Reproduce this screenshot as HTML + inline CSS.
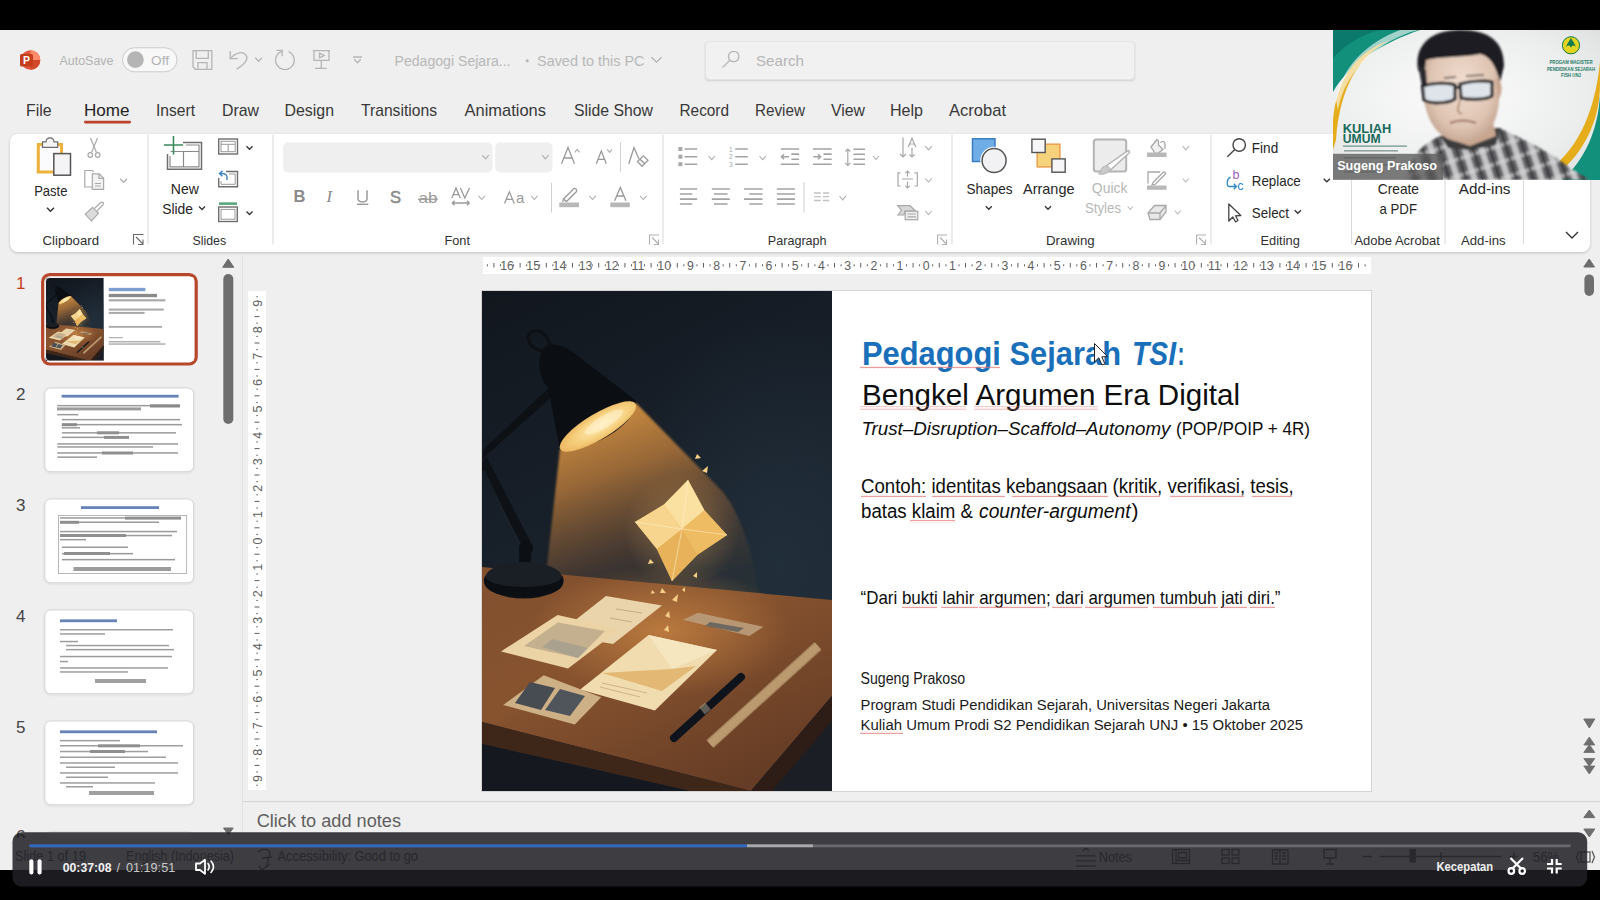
<!DOCTYPE html>
<html><head><meta charset="utf-8">
<style>
*{margin:0;padding:0;box-sizing:border-box}
html,body{width:1600px;height:900px;overflow:hidden;background:#000;font-family:"Liberation Sans",sans-serif}
.a{position:absolute}
svg{position:absolute;left:0;top:0;overflow:visible}
text{font-family:"Liberation Sans",sans-serif}
</style></head><body>
<div class="a" style="left:0;top:30px;width:1600px;height:840px;background:#efefef"></div>
<div id="ribbon" class="a" style="left:10px;top:134px;width:1580px;height:118px;background:#fff;border-radius:8px;box-shadow:0 1px 3px rgba(0,0,0,.2)"></div>
<!-- search box -->
<div class="a" style="left:705px;top:41px;width:430px;height:39px;background:#f1f1f1;border:1px solid #e3e3e3;border-radius:4px;box-shadow:0 1px 2px rgba(0,0,0,.13)"></div>

<svg id="top" width="1600" height="900" viewBox="0 0 1600 900">
  <!-- ppt icon -->
  <g>
    <circle cx="30.5" cy="60" r="9.8" fill="#e1563a"/>
    <path d="M30.5 50.2 A9.8 9.8 0 0 1 40.3 60 L30.5 60Z" fill="#ff8b6a"/>
    <path d="M30.5 60 L40.3 60 A9.8 9.8 0 0 1 30.5 69.8Z" fill="#d3492b"/>
    <rect x="20" y="54" width="13" height="12.5" rx="1.5" fill="#c43e1c"/>
    <text x="26.4" y="64.3" font-size="10.5" font-weight="bold" fill="#fff" text-anchor="middle">P</text>
  </g>
  <text x="59.5" y="64.8" font-size="13.2" fill="#b3b3b3" textLength="54" lengthAdjust="spacingAndGlyphs">AutoSave</text>
  <rect x="122.5" y="47.8" width="54.5" height="24" rx="12" fill="#f8f8f8" stroke="#cbcbcb" stroke-width="1"/>
  <circle cx="135.4" cy="59.6" r="8.4" fill="#b5b5b5"/>
  <text x="151" y="64.5" font-size="13.2" fill="#b3b3b3" textLength="18" lengthAdjust="spacingAndGlyphs">Off</text>
  <g fill="none" stroke="#b5b5b5" stroke-width="1.3">
    <!-- save -->
    <path d="M193 50.6 H211.8 V69.3 H195.5 L193 66.8Z"/>
    <path d="M196.2 50.6 V58.3 H208.3 V50.6"/>
    <path d="M198 69.3 V62.6 H207 V69.3"/>
    <!-- undo -->
    <path d="M230.2 51 V58.6 H237.8"/>
    <path d="M230.6 58.4 C236 52 244 50.5 246.6 56.5 C248 60 245 64 236.5 69.3"/>
    <path d="M255.3 57.8 L258.6 61.2 L261.9 57.8"/>
    <!-- redo -->
    <path d="M282 51.4 A9.3 9.3 0 1 0 288.6 51.7"/>
    <path d="M276.5 50.4 H282.2 V56.3"/>
    <!-- present -->
    <path d="M312.8 50.6 H330 M314 50.6 V60.3 H329 V50.6 M321.3 60.3 V68.2 M315 68.4 H326.8"/>
    <path d="M319.5 53.2 L324.2 55.5 L319.5 57.8Z"/>
    <!-- customize -->
    <path d="M353 57 H362 M354.2 59.3 L357.5 62.8 L360.8 59.3"/>
    <!-- saved chevron -->
    <path d="M651.5 57.2 L656.5 62.2 L661.5 57.2"/>
    <!-- search icon -->
    <circle cx="733.7" cy="56.5" r="5.2"/>
    <path d="M729.9 60.3 L722.4 67.6"/>
  </g>
  <text x="394.5" y="65.5" font-size="14" fill="#b8b8b8" textLength="116" lengthAdjust="spacingAndGlyphs">Pedagogi Sejara...</text>
  <circle cx="527.2" cy="60.8" r="1.6" fill="#b8b8b8"/>
  <text x="537" y="65.5" font-size="14" fill="#b8b8b8" textLength="107.5" lengthAdjust="spacingAndGlyphs">Saved to this PC</text>
  <text x="756" y="66" font-size="14.5" fill="#b5b5b5" textLength="48" lengthAdjust="spacingAndGlyphs">Search</text>

  <!-- tabs -->
  <g font-size="17" fill="#383838">
    <text x="26" y="116.3" textLength="25.5" lengthAdjust="spacingAndGlyphs">File</text>
    <text x="84" y="116.3" fill="#222" textLength="45.5" lengthAdjust="spacingAndGlyphs">Home</text>
    <text x="156" y="116.3" textLength="39" lengthAdjust="spacingAndGlyphs">Insert</text>
    <text x="222" y="116.3" textLength="37" lengthAdjust="spacingAndGlyphs">Draw</text>
    <text x="284.5" y="116.3" textLength="49.5" lengthAdjust="spacingAndGlyphs">Design</text>
    <text x="361" y="116.3" textLength="76" lengthAdjust="spacingAndGlyphs">Transitions</text>
    <text x="464.5" y="116.3" textLength="81.5" lengthAdjust="spacingAndGlyphs">Animations</text>
    <text x="574" y="116.3" textLength="79" lengthAdjust="spacingAndGlyphs">Slide Show</text>
    <text x="679.5" y="116.3" textLength="49.5" lengthAdjust="spacingAndGlyphs">Record</text>
    <text x="755" y="116.3" textLength="50" lengthAdjust="spacingAndGlyphs">Review</text>
    <text x="831" y="116.3" textLength="34" lengthAdjust="spacingAndGlyphs">View</text>
    <text x="890" y="116.3" textLength="33" lengthAdjust="spacingAndGlyphs">Help</text>
    <text x="949" y="116.3" textLength="57" lengthAdjust="spacingAndGlyphs">Acrobat</text>
  </g>
  <rect x="84" y="120.8" width="47" height="2.6" rx="1.3" fill="#b8432a"/>
</svg>

<svg id="rib" width="1600" height="900" viewBox="0 0 1600 900">
  <!-- separators -->
  <g fill="#dadada">
    <rect x="147.5" y="134.5" width="1" height="110"/>
    <rect x="272.5" y="134.5" width="1" height="110"/>
    <rect x="662.5" y="134.5" width="1" height="110"/>
    <rect x="951.5" y="134.5" width="1" height="110"/>
    <rect x="1210.5" y="134.5" width="1" height="110"/>
    <rect x="1351" y="180" width="1" height="64"/>
    <rect x="1444.5" y="180" width="1" height="64"/>
    <rect x="1523" y="180" width="1" height="64"/>
  </g>
  <g font-size="13.5" fill="#303030">
    <text x="42.5" y="244.6" textLength="56.5" lengthAdjust="spacingAndGlyphs">Clipboard</text>
    <text x="192.6" y="244.6" textLength="33.5" lengthAdjust="spacingAndGlyphs">Slides</text>
    <text x="444.5" y="244.6" textLength="25.5" lengthAdjust="spacingAndGlyphs">Font</text>
    <text x="767.8" y="244.6" textLength="58.8" lengthAdjust="spacingAndGlyphs">Paragraph</text>
    <text x="1046" y="244.6" textLength="48.7" lengthAdjust="spacingAndGlyphs">Drawing</text>
    <text x="1260.5" y="244.6" textLength="39.3" lengthAdjust="spacingAndGlyphs">Editing</text>
    <text x="1354.4" y="244.6" textLength="85.4" lengthAdjust="spacingAndGlyphs">Adobe Acrobat</text>
    <text x="1461" y="244.6" textLength="44.6" lengthAdjust="spacingAndGlyphs">Add-ins</text>
  </g>
  <!-- launchers -->
  <g fill="none" stroke="#6a6a6a" stroke-width="1.1">
    <path d="M133.5 244.5 V234.5 H143.5 M136 237 L143 244 M143 239.5 V244.5 H138"/>
  </g>
  <g fill="none" stroke="#b0b0b0" stroke-width="1.1">
    <path d="M649.5 244.5 V235 H659 M652 237.5 L658.5 244 M658.5 239.5 V244.5 H654"/>
    <path d="M937.6 244.5 V235 H947 M940 237.5 L946.5 244 M946.5 239.5 V244.5 H942"/>
    <path d="M1196.6 244.5 V235 H1206 M1199 237.5 L1205.5 244 M1205.5 239.5 V244.5 H1201"/>
  </g>

  <!-- ===== Clipboard ===== -->
  <rect x="38.3" y="144.5" width="23.2" height="27.5" fill="#fbfbfd" stroke="#ecb23c" stroke-width="3"/>
  <path d="M42.5 147.3 V141.8 H46 C46.5 136.5 53.5 136.5 54 141.8 H57.7 V147.3Z" fill="#f4f4f4" stroke="#6b6b6b" stroke-width="1.2"/>
  <rect x="53.8" y="153.6" width="16.7" height="21.6" fill="#f4f4f6" stroke="#555" stroke-width="1.5"/>
  <text x="34.2" y="195.5" font-size="14.5" fill="#262626" textLength="33.3" lengthAdjust="spacingAndGlyphs">Paste</text>
  <path d="M47 207.8 L50.5 211.3 L54 207.8" fill="none" stroke="#333" stroke-width="1.4"/>
  <g fill="none" stroke="#a9a9a9" stroke-width="1.2">
    <!-- scissors -->
    <path d="M90.5 138 L96.5 152.5 M97.5 138 L91.5 152.5"/>
    <circle cx="90.3" cy="155" r="2.3"/><circle cx="97.7" cy="155" r="2.3"/>
    <!-- copy -->
    <path d="M92 187 H84.8 V170.5 H92.5 L93.5 172"/>
    <path d="M92.3 189.3 V173.8 H99.3 L103.6 178.2 V189.3Z" fill="#f2f2f2"/>
    <path d="M99 174 V178.4 H103.5 M95 183.5 H101 M95 186 H101"/>
    <path d="M120.3 179 L123.6 182.3 L126.9 179"/>
    <!-- painter -->
    <path d="M94.5 208.5 L101 202.3 C102.5 201.5 104 203 103.2 204.5 L97 211"/>
    <path d="M92.5 207.3 L98.5 213.3 L91.5 220.8 L85.3 214.3 Z" fill="#dcdcdc"/>
  </g>

  <!-- ===== Slides ===== -->
  <g fill="none" stroke-width="1.5">
    <path d="M167.5 154 V169.3 H201.5 V142.5 H183" stroke="#6d6d6d"/>
    <path d="M170 156 V166.8 H199 V145 H186 M170.5 151.5 H198.5 M183.5 151.8 V166.5" stroke="#8a8a8a" stroke-width="1.2"/>
    <path d="M173.5 136 V154.5 M164 145 H183" stroke="#3a8a5c" stroke-width="1.6"/>
  </g>
  <text x="170.8" y="193.5" font-size="14.5" fill="#262626" textLength="28" lengthAdjust="spacingAndGlyphs">New</text>
  <text x="162.2" y="213.5" font-size="14.5" fill="#262626" textLength="30.8" lengthAdjust="spacingAndGlyphs">Slide</text>
  <g fill="none" stroke="#333" stroke-width="1.3">
    <path d="M199 206.5 L202 209.5 L205 206.5"/>
    <path d="M246.5 146.3 L249.5 149.3 L252.5 146.3"/>
    <path d="M246.5 211.5 L249.5 214.5 L252.5 211.5"/>
  </g>
  <g fill="none" stroke="#6d6d6d" stroke-width="1.4">
    <rect x="218.7" y="139" width="18.8" height="15"/>
    <rect x="221" y="141.3" width="14.2" height="10.4" stroke="#999" stroke-width="1"/>
    <path d="M221 144.3 H235 M228.2 144.3 V151.5" stroke="#999" stroke-width="1"/>
    <path d="M226 171.5 H237.5 V186.7 H218.7 V178" />
    <path d="M221 181 V184.3 H235.2 V174 H229" stroke="#999" stroke-width="1"/>
    <rect x="218.7" y="207" width="18.6" height="14.5"/>
    <rect x="221" y="209.4" width="14" height="9.8" stroke="#999" stroke-width="1"/>
  </g>
  <path d="M219 203.6 H237" stroke="#58a87a" stroke-width="2.6"/>
  <path d="M227 180 V177.5 C227 174.5 225 173.5 222 173.5 H219.5 M222.5 170.8 L219.5 173.5 L222.5 176.3" fill="none" stroke="#3d82c4" stroke-width="1.4"/>

  <!-- ===== Font ===== -->
  <rect x="283" y="142.5" width="209.5" height="30" rx="5" fill="#efefef"/>
  <rect x="495.2" y="142.5" width="57.3" height="30" rx="5" fill="#efefef"/>
  <g fill="none" stroke="#adadad" stroke-width="1.1">
    <path d="M482.3 155.2 L485.5 158.8 L488.7 155.2"/>
    <path d="M542.2 155.2 L545.4 158.8 L548.6 155.2"/>
    <path d="M574.8 152.3 L577.2 149.3 L579.6 152.3"/>
    <path d="M607.2 149.3 L609.6 152.3 L612 149.3"/>
    <path d="M478.5 195.8 L481.7 199.5 L485 195.8"/>
    <path d="M531.3 195.8 L534.4 199.5 L537.5 195.8"/>
    <path d="M589.3 195.8 L592.6 199.5 L595.8 195.8"/>
    <path d="M640 195.8 L643.3 199.5 L646.6 195.8"/>
  </g>
  <rect x="620" y="142.3" width="1" height="29.7" fill="#d0d0d0"/>
  <rect x="551" y="182.8" width="1" height="29.8" fill="#d0d0d0"/>
  <g fill="none" stroke="#9a9a9a" stroke-width="1.3">
    <path d="M561.5 163.7 L568 147.5 L574.5 163.7 M563.8 158 H572.2"/>
    <path d="M596.3 163.7 L601.3 151 L606.3 163.7 M598 159.3 H604.6"/>
    <path d="M628.8 163.7 L634 147.5 L639 159"/>
    <path d="M637.5 161.5 L643.5 155.8 L648 160.3 L642 166.2Z M640 159.3 L644.5 163.5"/>
    <path d="M451.8 198 L456 188 L460.2 198 M453.3 194.6 H458.7 M460.4 188 L464.8 198 L469.5 188"/>
    <path d="M452 203 H469.5 M452 203 L454.5 200.8 M452 203 L454.5 205.3 M469.5 203 L467 200.8 M469.5 203 L467 205.3"/>
    <path d="M504.5 203.4 L509.4 191.8 L514.3 203.4 M506 199.3 H513"/>
    <path d="M362 191 V202.5" stroke="none"/>
    <path d="M358 190.2 V198.5 C358 203 367 203 367 198.5 V190.2" stroke-width="1.5"/>
    <path d="M357 204.3 H368.3" stroke-width="1.4"/>
    <path d="M418 199.2 H437.7" stroke-width="1.3"/>
    <path d="M614.6 200.8 L620.3 187.4 L626 200.8 M616.6 196 H624"/>
    <path d="M563.5 199 L573.5 189 C575 187.5 577.5 189.5 576.5 191.5 L566.5 201.5 Z M562.8 202 L563.5 199"/>
  </g>
  <rect x="559.3" y="202.5" width="19.7" height="4.7" fill="#b8b8b8"/>
  <rect x="610.3" y="202.5" width="19.5" height="4.7" fill="#b8b8b8"/>
  <text x="293.5" y="202.3" font-size="16.5" font-weight="bold" fill="#8a8a8a">B</text>
  <text x="326.5" y="202.3" font-size="16.5" font-style="italic" fill="#8a8a8a" font-family="Liberation Serif" style="font-family:'Liberation Serif'">I</text>
  <text x="390" y="202.8" font-size="16.5" fill="#8a8a8a" stroke="#8a8a8a" stroke-width="0.5">S</text>
  <text x="418.5" y="203" font-size="15" fill="#9a9a9a" textLength="19" lengthAdjust="spacingAndGlyphs">ab</text>
  <text x="516" y="203.4" font-size="15" fill="#9a9a9a">a</text>
</svg>

<svg id="rib2" width="1600" height="900" viewBox="0 0 1600 900">
  <!-- ===== Paragraph ===== -->
  <g fill="none" stroke="#a3a3a3" stroke-width="1.6">
    <path d="M684.6 149 H697.2 M684.6 156.7 H697.2 M684.6 164.2 H697.2"/>
    <path d="M735.2 149 H747.8 M735.2 156.7 H747.8 M735.2 164.2 H747.8"/>
    <path d="M780.8 149 H799.1 M791.3 154.1 H799.1 M791.3 159.2 H799.1 M780.8 164.2 H799.1 M781.5 156.7 H789 M784 154.2 L781.5 156.7 L784 159.2"/>
    <path d="M813 149 H831.7 M823.5 154.1 H831.7 M823.5 159.2 H831.7 M813 164.2 H831.7 M813.3 156.7 H820.5 M818 154.2 L820.5 156.7 L818 159.2"/>
    <path d="M853.5 149.2 H865 M853.5 154.2 H865 M853.5 159.2 H865 M853.5 164.2 H865"/>
    <path d="M679.9 189 H697.2 M679.9 194 H692.3 M679.9 199.1 H697.2 M679.9 204 H692.3"/>
    <path d="M711.8 189 H729.8 M714 194 H727.6 M711.8 199.1 H729.8 M714 204 H727.6"/>
    <path d="M744 189 H762.5 M749.3 194 H762.5 M744 199.1 H762.5 M749.3 204 H762.5"/>
    <path d="M776.9 189 H794.9 M776.9 194 H794.9 M776.9 199.1 H794.9 M776.9 204 H794.9"/>
  </g>
  <g fill="#a8a8a8">
    <rect x="678.4" y="147" width="4" height="4"/><rect x="678.4" y="154.7" width="4" height="4"/><rect x="678.4" y="162.2" width="4" height="4"/>
  </g>
  <g font-size="6.5" fill="#a8a8a8"><text x="729" y="151.5">1</text><text x="729" y="159.2">2</text><text x="729" y="166.8">3</text></g>
  <g fill="none" stroke="#c4c4c4" stroke-width="1.3">
    <path d="M814 193 H820.7 M823 193 H829.2 M814 196.7 H820.7 M823 196.7 H829.2 M814 200.5 H820.7 M823 200.5 H829.2"/>
  </g>
  <g fill="none" stroke="#a8a8a8" stroke-width="1.2">
    <path d="M847.8 149 V165.5 M845.3 151.5 L847.8 149 L850.3 151.5 M845.3 163 L847.8 165.5 L850.3 163"/>
    <path d="M903 137.5 V157 M900 154 L903 157 L906 154 M912 148 V157 M909.5 154.5 L912 157 L914.5 154.5"/>
    <path d="M908.2 147 L912 138.3 L915.8 147 M909.5 144 H914.5"/>
    <path d="M900.5 172.8 H898 V186 H900.5 M914.5 172.8 H917.3 V186 H914.5 M902 179 H913 M907.5 171 V176.5 M905.3 173.2 L907.5 171 L909.7 173.2 M907.5 181.5 V188 M905.3 185.8 L907.5 188 L909.7 185.8"/>
    <path d="M897.8 205.7 H910 L915.5 211 H905 L904 215 H898 L901.5 210.5Z" fill="#d8d8d8"/>
    <rect x="905.2" y="211.2" width="12.6" height="8.5" fill="#eee"/>
    <path d="M907.5 214 H916 M907.5 216.8 H916"/>
  </g>
  <rect x="803.5" y="182" width="1" height="30.6" fill="#d0d0d0"/>
  <g fill="none" stroke="#adadad" stroke-width="1.1">
    <path d="M708.5 156 L711.7 159.6 L714.9 156"/>
    <path d="M759.5 156 L762.7 159.6 L765.9 156"/>
    <path d="M873 156 L876 159.5 L879 156"/>
    <path d="M925.3 146.2 L928.5 149.8 L931.7 146.2"/>
    <path d="M925.3 178.5 L928.5 182 L931.7 178.5"/>
    <path d="M925.3 211 L928.5 214.5 L931.7 211"/>
    <path d="M839.5 196 L842.7 199.8 L845.9 196"/>
  </g>

  <!-- ===== Drawing ===== -->
  <rect x="972.5" y="138.8" width="22.5" height="22.7" fill="#6fade6" stroke="#3a7ec2" stroke-width="1.5"/>
  <circle cx="994.1" cy="160.5" r="13.8" fill="#fff"/>
  <circle cx="994.1" cy="160.5" r="12" fill="#f2f2f4" stroke="#555" stroke-width="1.5"/>
  <text x="966.5" y="193.5" font-size="14.5" fill="#262626" textLength="46" lengthAdjust="spacingAndGlyphs">Shapes</text>
  <rect x="1037.2" y="144.2" width="22.7" height="22.7" fill="#f7d27c" stroke="#eaa04e" stroke-width="1.5"/>
  <rect x="1031.9" y="139.2" width="13.3" height="13.3" fill="#f6f6f8" stroke="#555" stroke-width="1.4"/>
  <rect x="1051.9" y="158.9" width="13.3" height="13.3" fill="#f6f6f8" stroke="#555" stroke-width="1.4"/>
  <text x="1023" y="193.5" font-size="14.5" fill="#262626" textLength="51.5" lengthAdjust="spacingAndGlyphs">Arrange</text>
  <g fill="none" stroke="#333" stroke-width="1.3">
    <path d="M985.8 206.2 L988.8 209.3 L991.8 206.2"/>
    <path d="M1045 206.2 L1048 209.3 L1051 206.2"/>
    <path d="M1323.7 178.7 L1326.8 181.8 L1329.9 178.7"/>
    <path d="M1294.7 210.2 L1297.8 213.3 L1300.9 210.2"/>
    <path d="M1566 232 L1572 238 L1578 232" stroke-width="1.4"/>
  </g>
  <rect x="1093.8" y="139.5" width="32.4" height="32" rx="2.5" fill="#ececec" stroke="#b3b3b3" stroke-width="2"/>
  <path d="M1106 166 L1127.5 151 C1129.5 150 1130 152 1129 153 L1110 170.5" fill="#fff" stroke="#b3b3b3" stroke-width="1.5"/>
  <path d="M1103 167 C1108 164.5 1111 168 1109.5 170.5 C1107 174 1102 175 1098.5 173.8 C1101 172 1100.5 168.5 1103 167Z" fill="#c9c9c9" stroke="#b0b0b0" stroke-width="1"/>
  <text x="1091.8" y="193.2" font-size="14.5" fill="#b8b8b8" textLength="35.7" lengthAdjust="spacingAndGlyphs">Quick</text>
  <text x="1085" y="212.5" font-size="14.5" fill="#b8b8b8" textLength="36" lengthAdjust="spacingAndGlyphs">Styles</text>
  <g fill="none" stroke="#b8b8b8" stroke-width="1.1">
    <path d="M1127.7 206.5 L1130.3 209.5 L1132.9 206.5"/>
    <path d="M1182.7 146.2 L1185.8 149.8 L1188.9 146.2"/>
    <path d="M1182.7 178.5 L1185.8 182 L1188.9 178.5"/>
    <path d="M1174.7 210.5 L1177.8 214 L1180.9 210.5"/>
  </g>
  <g fill="none" stroke="#a8a8a8" stroke-width="1.3">
    <path d="M1151 147 L1157 139.5 L1158.5 141 L1158.5 145 L1163 149.5 L1156 154.5Z" fill="#f0f0f0"/>
    <path d="M1160.5 143 C1162 140.5 1164.5 141 1165 144 V149"/>
    <path d="M1148 183.5 V172 H1160"/>
    <path d="M1153 182.5 L1163 172.5 C1164.5 171 1166.5 173 1165 174.5 L1155 184.5 L1152 185Z"/>
    <path d="M1148 213 L1154.5 205.5 H1166 L1166 212 L1160 219.5 H1150 Z" fill="#e8e8e8"/>
    <path d="M1148 213 H1160 L1166 205.7 M1160 213 V219.5"/>
  </g>
  <rect x="1147" y="152.5" width="19.5" height="4.5" fill="#b8b8b8"/>
  <rect x="1147" y="185.5" width="19.5" height="4.3" fill="#b8b8b8"/>

  <!-- ===== Editing ===== -->
  <g fill="none" stroke="#444" stroke-width="1.4">
    <circle cx="1239.2" cy="145" r="6.2"/>
    <path d="M1234.8 149.5 L1227.3 156.8"/>
    <path d="M1228.8 204 V221 L1232.8 217 L1235.5 221.8 L1238 220.5 L1235.5 215.8 L1240.8 215.5 Z" stroke-width="1.3" stroke-linejoin="round"/>
  </g>
  <text x="1232.5" y="179.3" font-size="12.5" fill="#9a5fb5">b</text>
  <text x="1237.3" y="190" font-size="12.5" fill="#2f86c8">c</text>
  <path d="M1230.5 177.2 C1226.5 179 1226 186 1229.5 186.5 H1236.3 M1233.8 183.8 L1236.5 186.5 L1233.8 189.2" fill="none" stroke="#2f86c8" stroke-width="1.3"/>
  <g font-size="14.5" fill="#262626">
    <text x="1251.8" y="153" textLength="26.4" lengthAdjust="spacingAndGlyphs">Find</text>
    <text x="1251.8" y="186" textLength="49" lengthAdjust="spacingAndGlyphs">Replace</text>
    <text x="1251.8" y="218" textLength="37.2" lengthAdjust="spacingAndGlyphs">Select</text>
    <text x="1377.8" y="194" textLength="41.2" lengthAdjust="spacingAndGlyphs">Create</text>
    <text x="1379.5" y="214" textLength="37.5" lengthAdjust="spacingAndGlyphs">a PDF</text>
    <text x="1458.8" y="194" textLength="51.7" lengthAdjust="spacingAndGlyphs">Add-ins</text>
  </g>
</svg>

<svg id="main" width="1600" height="900" viewBox="0 0 1600 900">
  <!-- left panel scrollbar -->
  <rect x="242" y="253" width="1" height="617" fill="#e2e2e2"/>
  <path d="M222.7 267.3 L228.2 259 L233.8 267.3Z" fill="#6e6e6e" stroke="#6e6e6e" stroke-width="1" stroke-linejoin="round"/>
  <rect x="223.3" y="274" width="10" height="150" rx="5" fill="#6e6e6e"/>
  <path d="M223.5 828 L228.3 834.8 L233.2 828Z" fill="#6e6e6e" stroke="#6e6e6e" stroke-width="1" stroke-linejoin="round"/>
  <!-- right scrollbar -->
  <path d="M1583.8 267 L1589.2 259 L1594.6 267Z" fill="#6e6e6e" stroke="#6e6e6e" stroke-width="1" stroke-linejoin="round"/>
  <rect x="1584.4" y="274.4" width="9.6" height="21.5" rx="4.8" fill="#6e6e6e"/>
  <path d="M1583.8 719 L1589.3 728 L1594.8 719Z" fill="#6e6e6e" stroke="#6e6e6e" stroke-width="1" stroke-linejoin="round"/>
  <path d="M1583.8 745 L1589.3 737 L1594.8 745Z M1583.8 752.5 L1589.3 744.5 L1594.8 752.5Z" fill="#6e6e6e" stroke="#6e6e6e" stroke-width="0.8" stroke-linejoin="round"/>
  <path d="M1583.8 758.5 L1589.3 766.5 L1594.8 758.5Z M1583.8 766 L1589.3 774 L1594.8 766Z" fill="#6e6e6e" stroke="#6e6e6e" stroke-width="0.8" stroke-linejoin="round"/>
  <path d="M1583.8 817.6 L1589.3 810 L1594.8 817.6Z" fill="#6e6e6e" stroke="#6e6e6e" stroke-width="1" stroke-linejoin="round"/>
  <path d="M1583.8 829 L1589.3 837 L1594.8 829Z" fill="#6e6e6e" stroke="#6e6e6e" stroke-width="1" stroke-linejoin="round"/>
  <!-- rulers -->
  <rect x="483" y="257" width="888" height="17" fill="#fff"/>
  <rect x="248" y="291" width="18" height="499" fill="#fff"/>
  <g font-size="12.3" fill="#606060">
<text x="507.0" y="270" text-anchor="middle">16</text>
<text x="533.2" y="270" text-anchor="middle">15</text>
<text x="559.4" y="270" text-anchor="middle">14</text>
<text x="585.6" y="270" text-anchor="middle">13</text>
<text x="611.8" y="270" text-anchor="middle">12</text>
<text x="638.0" y="270" text-anchor="middle">11</text>
<text x="664.2" y="270" text-anchor="middle">10</text>
<text x="690.4" y="270" text-anchor="middle">9</text>
<text x="716.6" y="270" text-anchor="middle">8</text>
<text x="742.8" y="270" text-anchor="middle">7</text>
<text x="769.0" y="270" text-anchor="middle">6</text>
<text x="795.2" y="270" text-anchor="middle">5</text>
<text x="821.4" y="270" text-anchor="middle">4</text>
<text x="847.6" y="270" text-anchor="middle">3</text>
<text x="873.8" y="270" text-anchor="middle">2</text>
<text x="900.0" y="270" text-anchor="middle">1</text>
<text x="926.2" y="270" text-anchor="middle">0</text>
<text x="952.4" y="270" text-anchor="middle">1</text>
<text x="978.6" y="270" text-anchor="middle">2</text>
<text x="1004.8" y="270" text-anchor="middle">3</text>
<text x="1031.0" y="270" text-anchor="middle">4</text>
<text x="1057.2" y="270" text-anchor="middle">5</text>
<text x="1083.4" y="270" text-anchor="middle">6</text>
<text x="1109.6" y="270" text-anchor="middle">7</text>
<text x="1135.8" y="270" text-anchor="middle">8</text>
<text x="1162.0" y="270" text-anchor="middle">9</text>
<text x="1188.2" y="270" text-anchor="middle">10</text>
<text x="1214.4" y="270" text-anchor="middle">11</text>
<text x="1240.6" y="270" text-anchor="middle">12</text>
<text x="1266.8" y="270" text-anchor="middle">13</text>
<text x="1293.0" y="270" text-anchor="middle">14</text>
<text x="1319.2" y="270" text-anchor="middle">15</text>
<text x="1345.4" y="270" text-anchor="middle">16</text>
<rect x="486.9" y="264.3" width="1" height="2"/>
<rect x="493.4" y="263" width="1" height="4.5"/>
<rect x="500.0" y="264.3" width="1" height="2"/>
<rect x="513.1" y="264.3" width="1" height="2"/>
<rect x="519.6" y="263" width="1" height="4.5"/>
<rect x="526.2" y="264.3" width="1" height="2"/>
<rect x="539.2" y="264.3" width="1" height="2"/>
<rect x="545.8" y="263" width="1" height="4.5"/>
<rect x="552.4" y="264.3" width="1" height="2"/>
<rect x="565.5" y="264.3" width="1" height="2"/>
<rect x="572.0" y="263" width="1" height="4.5"/>
<rect x="578.6" y="264.3" width="1" height="2"/>
<rect x="591.7" y="264.3" width="1" height="2"/>
<rect x="598.2" y="263" width="1" height="4.5"/>
<rect x="604.8" y="264.3" width="1" height="2"/>
<rect x="617.9" y="264.3" width="1" height="2"/>
<rect x="624.4" y="263" width="1" height="4.5"/>
<rect x="631.0" y="264.3" width="1" height="2"/>
<rect x="644.0" y="264.3" width="1" height="2"/>
<rect x="650.6" y="263" width="1" height="4.5"/>
<rect x="657.1" y="264.3" width="1" height="2"/>
<rect x="670.2" y="264.3" width="1" height="2"/>
<rect x="676.8" y="263" width="1" height="4.5"/>
<rect x="683.4" y="264.3" width="1" height="2"/>
<rect x="696.5" y="264.3" width="1" height="2"/>
<rect x="703.0" y="263" width="1" height="4.5"/>
<rect x="709.6" y="264.3" width="1" height="2"/>
<rect x="722.6" y="264.3" width="1" height="2"/>
<rect x="729.2" y="263" width="1" height="4.5"/>
<rect x="735.8" y="264.3" width="1" height="2"/>
<rect x="748.9" y="264.3" width="1" height="2"/>
<rect x="755.4" y="263" width="1" height="4.5"/>
<rect x="762.0" y="264.3" width="1" height="2"/>
<rect x="775.0" y="264.3" width="1" height="2"/>
<rect x="781.6" y="263" width="1" height="4.5"/>
<rect x="788.1" y="264.3" width="1" height="2"/>
<rect x="801.2" y="264.3" width="1" height="2"/>
<rect x="807.8" y="263" width="1" height="4.5"/>
<rect x="814.4" y="264.3" width="1" height="2"/>
<rect x="827.5" y="264.3" width="1" height="2"/>
<rect x="834.0" y="263" width="1" height="4.5"/>
<rect x="840.6" y="264.3" width="1" height="2"/>
<rect x="853.6" y="264.3" width="1" height="2"/>
<rect x="860.2" y="263" width="1" height="4.5"/>
<rect x="866.8" y="264.3" width="1" height="2"/>
<rect x="879.9" y="264.3" width="1" height="2"/>
<rect x="886.4" y="263" width="1" height="4.5"/>
<rect x="893.0" y="264.3" width="1" height="2"/>
<rect x="906.0" y="264.3" width="1" height="2"/>
<rect x="912.6" y="263" width="1" height="4.5"/>
<rect x="919.1" y="264.3" width="1" height="2"/>
<rect x="932.2" y="264.3" width="1" height="2"/>
<rect x="938.8" y="263" width="1" height="4.5"/>
<rect x="945.4" y="264.3" width="1" height="2"/>
<rect x="958.5" y="264.3" width="1" height="2"/>
<rect x="965.0" y="263" width="1" height="4.5"/>
<rect x="971.6" y="264.3" width="1" height="2"/>
<rect x="984.6" y="264.3" width="1" height="2"/>
<rect x="991.2" y="263" width="1" height="4.5"/>
<rect x="997.8" y="264.3" width="1" height="2"/>
<rect x="1010.9" y="264.3" width="1" height="2"/>
<rect x="1017.4" y="263" width="1" height="4.5"/>
<rect x="1024.0" y="264.3" width="1" height="2"/>
<rect x="1037.0" y="264.3" width="1" height="2"/>
<rect x="1043.6" y="263" width="1" height="4.5"/>
<rect x="1050.2" y="264.3" width="1" height="2"/>
<rect x="1063.2" y="264.3" width="1" height="2"/>
<rect x="1069.8" y="263" width="1" height="4.5"/>
<rect x="1076.4" y="264.3" width="1" height="2"/>
<rect x="1089.5" y="264.3" width="1" height="2"/>
<rect x="1096.0" y="263" width="1" height="4.5"/>
<rect x="1102.6" y="264.3" width="1" height="2"/>
<rect x="1115.7" y="264.3" width="1" height="2"/>
<rect x="1122.2" y="263" width="1" height="4.5"/>
<rect x="1128.8" y="264.3" width="1" height="2"/>
<rect x="1141.8" y="264.3" width="1" height="2"/>
<rect x="1148.4" y="263" width="1" height="4.5"/>
<rect x="1155.0" y="264.3" width="1" height="2"/>
<rect x="1168.0" y="264.3" width="1" height="2"/>
<rect x="1174.6" y="263" width="1" height="4.5"/>
<rect x="1181.2" y="264.3" width="1" height="2"/>
<rect x="1194.2" y="264.3" width="1" height="2"/>
<rect x="1200.8" y="263" width="1" height="4.5"/>
<rect x="1207.4" y="264.3" width="1" height="2"/>
<rect x="1220.5" y="264.3" width="1" height="2"/>
<rect x="1227.0" y="263" width="1" height="4.5"/>
<rect x="1233.6" y="264.3" width="1" height="2"/>
<rect x="1246.6" y="264.3" width="1" height="2"/>
<rect x="1253.2" y="263" width="1" height="4.5"/>
<rect x="1259.8" y="264.3" width="1" height="2"/>
<rect x="1272.8" y="264.3" width="1" height="2"/>
<rect x="1279.4" y="263" width="1" height="4.5"/>
<rect x="1286.0" y="264.3" width="1" height="2"/>
<rect x="1299.0" y="264.3" width="1" height="2"/>
<rect x="1305.6" y="263" width="1" height="4.5"/>
<rect x="1312.2" y="264.3" width="1" height="2"/>
<rect x="1325.2" y="264.3" width="1" height="2"/>
<rect x="1331.8" y="263" width="1" height="4.5"/>
<rect x="1338.4" y="264.3" width="1" height="2"/>
<rect x="1351.5" y="264.3" width="1" height="2"/>
<rect x="1358.0" y="263" width="1" height="4.5"/>
<rect x="1364.6" y="264.3" width="1" height="2"/>

  </g>
  <g font-size="12.5" fill="#606060">
<text transform="translate(261.9 303.4) rotate(-90)" text-anchor="middle" x="0" y="0">9</text>
<text transform="translate(261.9 329.8) rotate(-90)" text-anchor="middle" x="0" y="0">8</text>
<text transform="translate(261.9 356.2) rotate(-90)" text-anchor="middle" x="0" y="0">7</text>
<text transform="translate(261.9 382.6) rotate(-90)" text-anchor="middle" x="0" y="0">6</text>
<text transform="translate(261.9 409.0) rotate(-90)" text-anchor="middle" x="0" y="0">5</text>
<text transform="translate(261.9 435.4) rotate(-90)" text-anchor="middle" x="0" y="0">4</text>
<text transform="translate(261.9 461.8) rotate(-90)" text-anchor="middle" x="0" y="0">3</text>
<text transform="translate(261.9 488.2) rotate(-90)" text-anchor="middle" x="0" y="0">2</text>
<text transform="translate(261.9 514.6) rotate(-90)" text-anchor="middle" x="0" y="0">1</text>
<text transform="translate(261.9 541.0) rotate(-90)" text-anchor="middle" x="0" y="0">0</text>
<text transform="translate(261.9 567.4) rotate(-90)" text-anchor="middle" x="0" y="0">1</text>
<text transform="translate(261.9 593.8) rotate(-90)" text-anchor="middle" x="0" y="0">2</text>
<text transform="translate(261.9 620.2) rotate(-90)" text-anchor="middle" x="0" y="0">3</text>
<text transform="translate(261.9 646.6) rotate(-90)" text-anchor="middle" x="0" y="0">4</text>
<text transform="translate(261.9 673.0) rotate(-90)" text-anchor="middle" x="0" y="0">5</text>
<text transform="translate(261.9 699.4) rotate(-90)" text-anchor="middle" x="0" y="0">6</text>
<text transform="translate(261.9 725.8) rotate(-90)" text-anchor="middle" x="0" y="0">7</text>
<text transform="translate(261.9 752.2) rotate(-90)" text-anchor="middle" x="0" y="0">8</text>
<text transform="translate(261.9 778.6) rotate(-90)" text-anchor="middle" x="0" y="0">9</text>
<rect x="256.3" y="296.3" width="1.6" height="1"/>
<rect x="256.3" y="309.5" width="1.6" height="1"/>
<rect x="254.5" y="316.1" width="5" height="1"/>
<rect x="256.3" y="322.7" width="1.6" height="1"/>
<rect x="256.3" y="335.9" width="1.6" height="1"/>
<rect x="254.5" y="342.5" width="5" height="1"/>
<rect x="256.3" y="349.1" width="1.6" height="1"/>
<rect x="256.3" y="362.3" width="1.6" height="1"/>
<rect x="254.5" y="368.9" width="5" height="1"/>
<rect x="256.3" y="375.5" width="1.6" height="1"/>
<rect x="256.3" y="388.7" width="1.6" height="1"/>
<rect x="254.5" y="395.3" width="5" height="1"/>
<rect x="256.3" y="401.9" width="1.6" height="1"/>
<rect x="256.3" y="415.1" width="1.6" height="1"/>
<rect x="254.5" y="421.7" width="5" height="1"/>
<rect x="256.3" y="428.3" width="1.6" height="1"/>
<rect x="256.3" y="441.5" width="1.6" height="1"/>
<rect x="254.5" y="448.1" width="5" height="1"/>
<rect x="256.3" y="454.7" width="1.6" height="1"/>
<rect x="256.3" y="467.9" width="1.6" height="1"/>
<rect x="254.5" y="474.5" width="5" height="1"/>
<rect x="256.3" y="481.1" width="1.6" height="1"/>
<rect x="256.3" y="494.3" width="1.6" height="1"/>
<rect x="254.5" y="500.9" width="5" height="1"/>
<rect x="256.3" y="507.5" width="1.6" height="1"/>
<rect x="256.3" y="520.7" width="1.6" height="1"/>
<rect x="254.5" y="527.3" width="5" height="1"/>
<rect x="256.3" y="533.9" width="1.6" height="1"/>
<rect x="256.3" y="547.1" width="1.6" height="1"/>
<rect x="254.5" y="553.7" width="5" height="1"/>
<rect x="256.3" y="560.3" width="1.6" height="1"/>
<rect x="256.3" y="573.5" width="1.6" height="1"/>
<rect x="254.5" y="580.1" width="5" height="1"/>
<rect x="256.3" y="586.7" width="1.6" height="1"/>
<rect x="256.3" y="599.9" width="1.6" height="1"/>
<rect x="254.5" y="606.5" width="5" height="1"/>
<rect x="256.3" y="613.1" width="1.6" height="1"/>
<rect x="256.3" y="626.3" width="1.6" height="1"/>
<rect x="254.5" y="632.9" width="5" height="1"/>
<rect x="256.3" y="639.5" width="1.6" height="1"/>
<rect x="256.3" y="652.7" width="1.6" height="1"/>
<rect x="254.5" y="659.3" width="5" height="1"/>
<rect x="256.3" y="665.9" width="1.6" height="1"/>
<rect x="256.3" y="679.1" width="1.6" height="1"/>
<rect x="254.5" y="685.7" width="5" height="1"/>
<rect x="256.3" y="692.3" width="1.6" height="1"/>
<rect x="256.3" y="705.5" width="1.6" height="1"/>
<rect x="254.5" y="712.1" width="5" height="1"/>
<rect x="256.3" y="718.7" width="1.6" height="1"/>
<rect x="256.3" y="731.9" width="1.6" height="1"/>
<rect x="254.5" y="738.5" width="5" height="1"/>
<rect x="256.3" y="745.1" width="1.6" height="1"/>
<rect x="256.3" y="758.3" width="1.6" height="1"/>
<rect x="254.5" y="764.9" width="5" height="1"/>
<rect x="256.3" y="771.5" width="1.6" height="1"/>
<rect x="256.3" y="784.7" width="1.6" height="1"/>
</g>
  <!-- slide -->
  <rect x="481.5" y="290.5" width="890" height="501" fill="#fff" stroke="#d4d4d4" stroke-width="1"/>
  <!-- notes -->
  <rect x="243" y="801" width="1357" height="1.2" fill="#d6d6d6"/>
  <text x="256.7" y="827" font-size="17.5" fill="#5f5f5f" textLength="144.3" lengthAdjust="spacingAndGlyphs">Click to add notes</text>
</svg>

<svg width="0" height="0" style="position:absolute">
 <defs>
  <linearGradient id="bgG" x1="0" y1="0" x2="0.35" y2="1">
    <stop offset="0" stop-color="#12171e"/><stop offset="0.5" stop-color="#18202a"/><stop offset="1" stop-color="#1e2a36"/>
  </linearGradient>
  <radialGradient id="bgR" cx="0.85" cy="0.55" r="0.5">
    <stop offset="0" stop-color="#22303c" stop-opacity="0.9"/><stop offset="1" stop-color="#22303c" stop-opacity="0"/>
  </radialGradient>
  <linearGradient id="coneG" x1="0.25" y1="0.05" x2="0.6" y2="0.95">
    <stop offset="0" stop-color="#d39143" stop-opacity="0.95"/>
    <stop offset="0.3" stop-color="#ae7439" stop-opacity="0.85"/>
    <stop offset="0.7" stop-color="#5e4534" stop-opacity="0.6"/>
    <stop offset="1" stop-color="#3a3632" stop-opacity="0.3"/>
  </linearGradient>
  <linearGradient id="deskG" x1="0" y1="0" x2="0.7" y2="1">
    <stop offset="0" stop-color="#82502f"/><stop offset="0.45" stop-color="#87532f"/><stop offset="1" stop-color="#653c25"/>
  </linearGradient>
  <radialGradient id="poolG" cx="0.5" cy="0.5" r="0.5">
    <stop offset="0" stop-color="#d08a45" stop-opacity="0.7"/><stop offset="1" stop-color="#d08a45" stop-opacity="0"/>
  </radialGradient>
  <radialGradient id="glowG" cx="0.5" cy="0.5" r="0.5">
    <stop offset="0" stop-color="#ffd27a" stop-opacity="0.35"/><stop offset="1" stop-color="#ffb85a" stop-opacity="0"/>
  </radialGradient>
  <radialGradient id="rimG" cx="0.55" cy="0.5" r="0.6">
    <stop offset="0" stop-color="#fff0c0"/><stop offset="0.6" stop-color="#f6cf7c"/><stop offset="1" stop-color="#e9b25c"/>
  </radialGradient>
  <pattern id="sq" width="4" height="3" patternUnits="userSpaceOnUse">
    <path d="M0 2.2 L1 0.8 L2 2.2 L3 0.8 L4 2.2" fill="none" stroke="#e57373" stroke-width="0.7"/>
  </pattern>
  <filter id="cb" x="-5%" y="-5%" width="110%" height="110%"><feGaussianBlur stdDeviation="1.2"/></filter>
  <symbol id="illo" viewBox="0 0 350 500">
    <rect width="350" height="500" fill="url(#bgG)"/>
    <rect width="350" height="500" fill="url(#bgR)"/>
    <!-- light cone -->
    <path d="M78 158 L154 112 L240 200 C258 222 270 255 280 320 L60 320 Z" fill="url(#coneG)" filter="url(#cb)"/>
    <!-- desk -->
    <path d="M0 276 L350 309 L350 405 L269 500 L0 431 Z" fill="url(#deskG)"/>
    <path d="M0 431 L269 500 L208 500 L0 453 Z" fill="#3e2619"/>
    <path d="M0 453 L208 500 L0 500 Z" fill="#15181e"/>
    <path d="M350 405 L350 500 L269 500 Z" fill="#1b1e24"/>
    <path d="M269 500 L350 405 L350 430 L290 500Z" fill="#2e1d16"/>
    <ellipse cx="180" cy="340" rx="130" ry="65" fill="url(#poolG)"/>
    <!-- lamp -->
    <path d="M72 92 L2 158 L0 168 L76 100 Z" fill="#0d1015"/>
    <path d="M-2 175 L42 258 L50 254 L4 165 Z" fill="#0e1116"/>
    <path d="M2 180 L36 250" stroke="#1d232b" stroke-width="1.2"/>
    <circle cx="44" cy="257" r="7" fill="#0c0f14"/>
    <rect x="37" y="255" width="12" height="22" fill="#0c0f14"/>
    <ellipse cx="41.7" cy="290" rx="40" ry="17.5" fill="#0f1318"/>
    <ellipse cx="41.7" cy="286" rx="38" ry="15" fill="#1a1f26"/>
    <path d="M3 284 C3 300 80 300 81 284 L81 292 C80 310 3 310 3 292Z" fill="#0b0e12"/>
    <path d="M60 60 C44 56 42 42 52 40 C60 38 66 46 68 54" fill="none" stroke="#0d1015" stroke-width="3"/>
    <path d="M62 57 C68 51 80 53 92 62 L153 109 C160 128 112 162 78 158 L66 96 C56 88 55 64 62 57Z" fill="#0b0e12"/>
    <ellipse cx="116" cy="135.5" rx="44" ry="12.8" transform="rotate(-31 116 135.5)" fill="url(#rimG)"/>
    <ellipse cx="122" cy="131" rx="22" ry="6" transform="rotate(-31 122 131)" fill="#fff3cf" opacity="0.55"/>
    <!-- star glow -->
    <circle cx="200" cy="240" r="58" fill="url(#glowG)"/>
    <!-- papers -->
    <path d="M124 305 L180 314.5 L131 353 L75 343.5 Z" fill="#ead4ac"/>
    <path d="M134 318 L160 322 M128 327 L150 331" stroke="#b8a07c" stroke-width="0.8"/>
    <path d="M75.6 324 L138 338 L86 377.5 L19 360.4 Z" fill="#ecd3a6"/>
    <path d="M76 331.5 L123 340 L96 367 L42 355 Z" fill="#c4b08e"/>
    <path d="M60 356 L96 367 L106 357 L70 348Z" fill="#9a9a8e" opacity="0.6"/>
    <path d="M61.7 384.2 L119.2 406.3 L92.8 433.5 L21.2 414 Z" fill="#cdb085"/>
    <path d="M48 391 L73 397 L59 419 L33 412 Z" fill="#474b52"/>
    <path d="M78 398 L103 405 L88 425 L63 419 Z" fill="#50555b"/>
    <path d="M166.6 344.1 L235 358.9 L172.9 419.5 L98.2 398.5 Z" fill="#f1dcb0"/>
    <path d="M166.6 344.1 L235 358.9 L190 378 Z" fill="#f6e6c0"/>
    <path d="M120 382 L190 378 L214 375 L180 400 Z" fill="#e2b874"/>
    <path d="M120 392 L165 402 M118 396 L158 406" stroke="#c7a878" stroke-width="0.8"/>
    <path d="M200.9 328.8 L216 321.8 L281.4 335.8 L267.4 345 Z" fill="#b89775"/>
    <path d="M228 331 L262 337 L256 341 L223 335 Z" fill="#6d6960"/>
    <!-- pen -->
    <path d="M192 447 L259 386" stroke="#0f141c" stroke-width="8" stroke-linecap="round"/>
    <path d="M220 420 L226 415" stroke="#b0a58f" stroke-width="9" opacity="0.5"/>
    <!-- ruler -->
    <path d="M228 453 L336 355" stroke="#a4825c" stroke-width="10.5"/><path d="M228 453 L336 355" stroke="#bb9a70" stroke-width="8"/>
    <path d="M232 452 L334 360" stroke="#b08c60" stroke-width="1" stroke-dasharray="1 6"/>
    <!-- star -->
    <path d="M206 189 L222.4 219.3 L245 244 L215.4 263.8 L190 290 L174.9 258 L153 231 L182 213.6 Z" fill="#f2c470"/>
    <path d="M206 189 L222.4 219.3 L200 238 L182 213.6 Z" fill="#fbe1a1"/>
    <path d="M153 231 L182 213.6 L200 238 L174.9 258 Z" fill="#f7d58e"/>
    <path d="M245 244 L222.4 219.3 L200 238 L215.4 263.8 Z" fill="#eebc62"/>
    <path d="M190 290 L174.9 258 L200 238 L215.4 263.8 Z" fill="#e8b25a"/>
    <path d="M206 189 L200 238 L190 290 M153 231 L200 238 L245 244" stroke="#fff0c8" stroke-width="0.8" opacity="0.7" fill="none"/>
    <!-- particles -->
    <g fill="#f5cf86">
      <path d="M215 163 L219 167 L213 168Z"/><path d="M220 180 L226 175 L225 182Z"/>
      <path d="M168 268 L172 272 L166 273Z"/><path d="M211 285 L215 281 L215 287Z"/>
      <path d="M180 297 L184 302 L178 302Z"/><path d="M190 309 L196 303 L195 311Z"/>
      <path d="M183 325 L187 320 L188 327Z"/><path d="M182 339 L186 334 L187 341Z"/>
      <path d="M170 299 L173 302 L169 303Z"/><path d="M200 299 L203 296 L203 301Z"/>
    </g>
  </symbol>
 </defs>
</svg>
<svg id="slideSvg" width="1600" height="900" viewBox="0 0 1600 900">
  <use href="#illo" x="482" y="291" width="350" height="500"/>
  <g fill="#0d0d0d">
    <text font-size="32.5" font-weight="bold" fill="#1a6fba" y="364.6"><tspan x="862" textLength="259" lengthAdjust="spacingAndGlyphs">Pedagogi Sejarah</tspan><tspan x="1132" font-style="italic" textLength="44" lengthAdjust="spacingAndGlyphs">TSI</tspan><tspan x="1177.5" textLength="7" lengthAdjust="spacingAndGlyphs">:</tspan></text>
    <text font-size="28.8" y="405.3" x="862" textLength="378" lengthAdjust="spacingAndGlyphs">Bengkel Argumen Era Digital</text>
    <text font-size="18.4" y="434.9"><tspan x="861.5" font-style="italic" textLength="309" lengthAdjust="spacingAndGlyphs">Trust–Disruption–Scaffold–Autonomy</tspan><tspan x="1176" textLength="134" lengthAdjust="spacingAndGlyphs">(POP/POIP + 4R)</tspan></text>
    <text font-size="19.5" y="492.5" x="861" textLength="432.7" lengthAdjust="spacingAndGlyphs">Contoh: identitas kebangsaan (kritik, verifikasi, tesis,</text>
    <text font-size="19.5" y="518.4"><tspan x="861" textLength="112" lengthAdjust="spacingAndGlyphs">batas klaim &amp;</tspan><tspan x="979" font-style="italic" textLength="151.6" lengthAdjust="spacingAndGlyphs">counter-argument</tspan><tspan x="1131.5" textLength="7" lengthAdjust="spacingAndGlyphs">)</tspan></text>
    <text font-size="18.5" y="603.7" x="860.5" textLength="420" lengthAdjust="spacingAndGlyphs">“Dari bukti lahir argumen; dari argumen tumbuh jati diri.”</text>
    <text font-size="15.6" y="684.2" x="860.5" fill="#1a1a1a" textLength="104.7" lengthAdjust="spacingAndGlyphs">Sugeng Prakoso</text>
    <text font-size="15.4" y="709.7" x="860.5" fill="#1a1a1a" textLength="409.5" lengthAdjust="spacingAndGlyphs">Program Studi Pendidikan Sejarah, Universitas Negeri Jakarta</text>
    <text font-size="15.4" y="729.6" x="860.5" fill="#1a1a1a" textLength="442.5" lengthAdjust="spacingAndGlyphs">Kuliah Umum Prodi S2 Pendidikan Sejarah UNJ • 15 Oktober 2025</text>
  </g>
  <g fill="url(#sq)">
    <rect x="860" y="366" width="140" height="3"/>
    <rect x="860" y="406.5" width="106" height="3"/><rect x="974" y="406.5" width="124" height="3"/>
    <rect x="861" y="494.5" width="65" height="3"/><rect x="932" y="494.5" width="73" height="3"/><rect x="1012" y="494.5" width="96" height="3"/>
    <rect x="1118" y="494.5" width="42" height="3"/><rect x="1170" y="494.5" width="74" height="3"/><rect x="1252" y="494.5" width="40" height="3"/>
    <rect x="910" y="520" width="45" height="3"/>
    <rect x="902" y="605.5" width="35" height="3"/><rect x="941" y="605.5" width="37" height="3"/><rect x="979" y="605.5" width="67" height="3"/>
    <rect x="1052" y="605.5" width="30" height="3"/><rect x="1085" y="605.5" width="63" height="3"/><rect x="1153" y="605.5" width="65" height="3"/>
    <rect x="1222" y="605.5" width="25" height="3"/><rect x="1250" y="605.5" width="25" height="3"/>
    <rect x="860" y="731" width="43" height="3"/>
  </g>
  <!-- mouse cursor -->
  <path d="M1094.5 343.5 V362 L1098.8 357.8 L1102 365 L1104.8 363.8 L1101.8 356.8 L1107.5 356.6 Z" fill="#fff" stroke="#222" stroke-width="1" stroke-linejoin="round"/>
</svg>
<svg id="thumbs" width="1600" height="900" viewBox="0 0 1600 900"><defs><filter id="tsh" x="-5%" y="-5%" width="110%" height="115%"><feDropShadow dx="0" dy="0.8" stdDeviation="0.8" flood-color="#000" flood-opacity="0.12"/></filter></defs><g font-size="17" fill="#444">
<text x="16" y="288.5" fill="#c43e1c">1</text>
<text x="16" y="399.5">2</text>
<text x="16" y="510.5">3</text>
<text x="16" y="621.5">4</text>
<text x="16" y="732.5">5</text>
<text x="16" y="841.5">6</text>
</g>
<rect x="42.7" y="274.6" width="153.5" height="89.4" rx="7" fill="#fff" stroke="#b7472a" stroke-width="3.2"/>
<svg x="45.5" y="277.5" width="148" height="83.5" viewBox="0 0 889 500" preserveAspectRatio="none"><rect width="889" height="500" fill="#fff"/><use href="#illo" x="0" y="0" width="350" height="500"/><rect x="380" y="62" width="220" height="20" fill="#7c9fd0"/><rect x="380" y="98" width="290" height="20" fill="#8a8a8a"/><rect x="380" y="130" width="340" height="13" fill="#a9a9a9"/><rect x="380" y="186" width="330" height="12" fill="#a8a8a8"/><rect x="380" y="206" width="215" height="12" fill="#a8a8a8"/><rect x="380" y="290" width="320" height="11" fill="#a8a8a8"/><rect x="380" y="356" width="85" height="8" fill="#b5b5b5"/><rect x="380" y="380" width="310" height="9" fill="#b0b0b0"/><rect x="380" y="394" width="340" height="9" fill="#b0b0b0"/></svg>
<rect x="45.5" y="277.5" width="148" height="83.5" rx="4" fill="none" stroke="#fff" stroke-width="0.8"/>
<rect x="44.8" y="388" width="148.8" height="83.7" rx="6" fill="#fff" stroke="#d2d2d2" stroke-width="0.9" filter="url(#tsh)"/>
<rect x="44.8" y="499" width="148.8" height="83.7" rx="6" fill="#fff" stroke="#d2d2d2" stroke-width="0.9" filter="url(#tsh)"/>
<rect x="44.8" y="610" width="148.8" height="83.7" rx="6" fill="#fff" stroke="#d2d2d2" stroke-width="0.9" filter="url(#tsh)"/>
<rect x="44.8" y="721" width="148.8" height="83.7" rx="6" fill="#fff" stroke="#d2d2d2" stroke-width="0.9" filter="url(#tsh)"/>
<rect x="44.8" y="832" width="148.8" height="83.7" rx="6" fill="#fff" stroke="#d2d2d2" stroke-width="0.9" filter="url(#tsh)"/>
<rect x="61.6" y="394.8" width="117" height="2.8" fill="#4a6fa8" opacity="0.85"/>
<rect x="57.3" y="404.9" width="107.7" height="1.5" fill="#9a9a9a"/>
<rect x="57.3" y="408.1" width="83.7" height="1.5" fill="#9a9a9a"/>
<rect x="57.3" y="413.9" width="21.200000000000003" height="1.5" fill="#9a9a9a"/>
<rect x="61.9" y="418.9" width="118.1" height="1.5" fill="#9a9a9a"/>
<rect x="61.9" y="423.9" width="120.1" height="1.5" fill="#9a9a9a"/>
<rect x="61.9" y="427.1" width="18.1" height="1.5" fill="#9a9a9a"/>
<rect x="61.9" y="432.1" width="114.1" height="1.5" fill="#9a9a9a"/>
<rect x="61.9" y="436.6" width="67.1" height="1.5" fill="#9a9a9a"/>
<rect x="57.3" y="443.2" width="120.7" height="1.5" fill="#9a9a9a"/>
<rect x="57.3" y="446.2" width="95.7" height="1.5" fill="#9a9a9a"/>
<rect x="57.3" y="452.2" width="120.7" height="1.5" fill="#9a9a9a"/>
<rect x="57.3" y="456.4" width="39.7" height="1.5" fill="#9a9a9a"/>
<rect x="150" y="404.3" width="30" height="3.2" fill="#8a8a8a"/><rect x="57" y="407.4" width="84" height="3" fill="#9c9c9c"/><rect x="61.9" y="423.2" width="15" height="3" fill="#8a8a8a"/><rect x="97" y="431.3" width="22" height="3" fill="#8f8f8f"/><rect x="104" y="435.9" width="25" height="3" fill="#8f8f8f"/><rect x="102" y="451.5" width="31" height="3" fill="#8f8f8f"/>
<rect x="81" y="506.2" width="78" height="2.8" fill="#4a6fa8" opacity="0.85"/>
<rect x="58.5" y="515.6" width="128.2" height="57.8" fill="none" stroke="#9a9a9a" stroke-width="0.7"/>
<rect x="60" y="517.2" width="120" height="1.5" fill="#9a9a9a"/>
<rect x="60" y="521.5" width="99" height="1.5" fill="#9a9a9a"/>
<rect x="60" y="530.8" width="117" height="1.5" fill="#9a9a9a"/>
<rect x="60" y="534.8" width="112" height="1.5" fill="#9a9a9a"/>
<rect x="60" y="538.9" width="26" height="1.5" fill="#9a9a9a"/>
<rect x="62" y="546.5" width="66" height="1.5" fill="#9a9a9a"/>
<rect x="62" y="552.9" width="71" height="1.5" fill="#9a9a9a"/>
<rect x="62" y="558.9" width="113" height="1.5" fill="#9a9a9a"/>
<rect x="125" y="516.6" width="56" height="3" fill="#8f8f8f"/><rect x="60" y="520.8" width="19" height="3" fill="#8f8f8f"/><rect x="60" y="534" width="66" height="3" fill="#8f8f8f"/><rect x="64" y="552" width="46" height="3" fill="#8f8f8f"/>
<rect x="73.5" y="567" width="97.5" height="4" fill="#9c9c9c"/>
<rect x="60" y="619.4" width="57" height="2.8" fill="#4a6fa8" opacity="0.85"/>
<rect x="60" y="629.0" width="113" height="1.5" fill="#9d9d9d"/>
<rect x="60" y="633.2" width="45" height="1.5" fill="#9d9d9d"/>
<rect x="60" y="640.8" width="18" height="1.5" fill="#9d9d9d"/>
<rect x="66" y="644.8" width="103" height="1.5" fill="#9d9d9d"/>
<rect x="66" y="648.9" width="108" height="1.5" fill="#9d9d9d"/>
<rect x="60" y="655.8" width="112" height="1.5" fill="#9d9d9d"/>
<rect x="60" y="660.8" width="8" height="1.5" fill="#9d9d9d"/>
<rect x="60" y="667.2" width="108" height="1.5" fill="#9d9d9d"/>
<rect x="60" y="671.2" width="68" height="1.5" fill="#9d9d9d"/>
<rect x="95" y="679" width="51" height="4" fill="#a0a0a0"/>
<rect x="60" y="730.4" width="97" height="2.8" fill="#4a6fa8" opacity="0.85"/>
<rect x="60" y="739.9" width="60" height="1.5" fill="#9d9d9d"/>
<rect x="60" y="745.0" width="123" height="1.5" fill="#9d9d9d"/>
<rect x="60" y="750.8" width="88" height="1.5" fill="#9d9d9d"/>
<rect x="60" y="756.5" width="106" height="1.5" fill="#9d9d9d"/>
<rect x="60" y="762.2" width="118" height="1.5" fill="#9d9d9d"/>
<rect x="66" y="766.5" width="49" height="1.5" fill="#9d9d9d"/>
<rect x="60" y="772.2" width="118" height="1.5" fill="#9d9d9d"/>
<rect x="66" y="776.5" width="42" height="1.5" fill="#9d9d9d"/>
<rect x="60" y="782.2" width="95" height="1.5" fill="#9d9d9d"/>
<rect x="66" y="786.0" width="27" height="1.5" fill="#9d9d9d"/>
<rect x="98" y="744.3" width="42" height="3" fill="#8f8f8f"/><rect x="90" y="750" width="35" height="3" fill="#8f8f8f"/><rect x="89" y="791" width="65" height="4" fill="#a0a0a0"/></svg>

<svg id="cam" width="1600" height="900" viewBox="0 0 1600 900">
  <defs>
    <clipPath id="camClip"><rect x="1333" y="30" width="267" height="150"/></clipPath>
    <radialGradient id="camBg" cx="0.45" cy="0.45" r="0.7">
      <stop offset="0" stop-color="#fbfbfb"/><stop offset="0.7" stop-color="#eceeed"/><stop offset="1" stop-color="#dfe2e1"/>
    </radialGradient>
    <radialGradient id="skin" cx="0.5" cy="0.45" r="0.6">
      <stop offset="0" stop-color="#f0ddd0"/><stop offset="0.7" stop-color="#dfc4b2"/><stop offset="1" stop-color="#bf9f8c"/>
    </radialGradient>
    <pattern id="plaid" width="16" height="16" patternUnits="userSpaceOnUse" patternTransform="rotate(-18)">
      <rect width="16" height="16" fill="#626266"/>
      <rect x="0" y="0" width="6" height="16" fill="#d4d4d6" opacity="0.85"/>
      <rect x="0" y="8" width="16" height="4" fill="#d8d8d8" opacity="0.6"/>
      <rect x="10" y="0" width="2" height="16" fill="#2a2a2c"/>
    </pattern>
    <filter id="blur1" x="-10%" y="-10%" width="120%" height="120%"><feGaussianBlur stdDeviation="1.1"/></filter>
    <filter id="blur2"><feGaussianBlur stdDeviation="1.4"/></filter>
  </defs>
  <g clip-path="url(#camClip)">
    <rect x="1333" y="30" width="267" height="150" fill="url(#camBg)"/>
    <!-- top-left teal swoosh -->
    <path d="M1333 30 H1420 C1385 42 1350 62 1333 92 Z" fill="#12907c"/>
    <path d="M1333 30 H1380 C1360 35 1345 45 1333 58 Z" fill="#0b7a6c"/>
    <path d="M1390 40 C1360 55 1340 85 1336 140 L1333 150 L1333 120 C1337 80 1355 52 1390 40Z" fill="#e5ad1c"/>
    <path d="M1418 30 C1380 40 1345 70 1338 110 L1336 100 C1342 66 1368 42 1400 30Z" fill="#fff" opacity="0.6"/>
    <!-- right teal swoosh -->
    <path d="M1600 95 C1598 130 1585 160 1562 180 H1600 Z" fill="#12907c"/>
    <path d="M1600 62 C1595 110 1580 145 1552 168 L1560 172 C1588 148 1600 115 1600 85Z" fill="#e5ad1c"/>
    <!-- logo -->
    <circle cx="1571" cy="45.3" r="8.6" fill="#e2d420" stroke="#0d7a4c" stroke-width="1"/>
    <path d="M1566 47 C1568 42 1570 40 1571 38 C1572 40 1574 42 1576 47 C1574 45 1572 45 1571 48 C1570 45 1568 45 1566 47Z" fill="#117a4e"/>
    <g font-size="4.6" font-weight="bold" fill="#1f7b68" text-anchor="middle">
      <text x="1571" y="63.8" textLength="43" lengthAdjust="spacingAndGlyphs">PROGAM MAGISTER</text>
      <text x="1571" y="70.5" textLength="48" lengthAdjust="spacingAndGlyphs">PENDIDIKAN SEJARAH</text>
      <text x="1571" y="77" textLength="20" lengthAdjust="spacingAndGlyphs">FISH UNJ</text>
    </g>
    <g font-weight="bold" fill="#17695a">
      <text x="1342.8" y="132.5" font-size="13" textLength="48.5" lengthAdjust="spacingAndGlyphs">KULIAH</text>
      <text x="1342.8" y="142.7" font-size="13" textLength="37.7" lengthAdjust="spacingAndGlyphs">UMUM</text>
    </g>
    <rect x="1343" y="145.6" width="64" height="1" fill="#4f7f76"/>
    <g fill="#7d8f8a" opacity="0.8">
      <rect x="1344" y="150" width="54" height="1.6"/><rect x="1344" y="157" width="52" height="1.6"/><rect x="1344" y="164" width="50" height="1.6"/><rect x="1344" y="171" width="40" height="1.6"/>
    </g>
    <!-- person -->
    <g filter="url(#blur1)">
      <!-- shirt -->
      <path d="M1405 180 C1410 160 1418 146 1440 136 L1470 130 L1500 128 C1520 138 1548 150 1570 168 L1590 180 Z" fill="url(#plaid)"/>
      <path d="M1440 136 L1470 130 L1500 128 L1496 145 L1470 150 L1448 148Z" fill="#3c3c3e"/>
      <!-- neck -->
      <path d="M1448 120 L1492 118 L1496 136 L1470 146 L1446 138Z" fill="#c9a690"/>
      <!-- face -->
      <path d="M1424 62 C1424 45 1440 36 1462 36 C1486 36 1500 48 1500 70 L1499 100 C1498 122 1488 140 1464 142 C1440 142 1428 124 1424 100Z" fill="url(#skin)"/>
      <!-- hair -->
      <path d="M1418 70 C1414 44 1432 30 1460 30 C1490 30 1504 42 1504 66 L1500 82 C1496 66 1490 56 1480 54 C1462 58 1440 56 1426 60 L1424 78Z" fill="#1f1f24"/>
      <path d="M1418 64 L1424 98 L1428 100 L1426 70Z" fill="#2a2a2e"/>
      <!-- ears -->
      <path d="M1495 78 C1502 78 1504 92 1498 100Z" fill="#c9a690"/>
      <!-- glasses -->
      <path d="M1422.5 86 C1432 83 1448 82 1455 85 L1455 99 C1448 104 1430 104 1424 100Z" fill="#dfe4ea" stroke="#18181b" stroke-width="3"/>
      <path d="M1460 84 C1470 81 1486 80 1492 82 L1492 96 C1486 100 1468 100 1461 98Z" fill="#dfe4ea" stroke="#18181b" stroke-width="3"/>
      <path d="M1455 88 L1460 87" stroke="#18181b" stroke-width="2.5"/>
      <!-- nose / mouth -->
      <path d="M1460 100 C1458 108 1456 112 1462 114" fill="none" stroke="#a8836e" stroke-width="1.5"/>
      <path d="M1450 123 C1458 120 1468 120 1476 123" fill="none" stroke="#9a6e62" stroke-width="2"/>
      <path d="M1444 78 L1456 77 M1466 76 L1484 75" stroke="#5a4a44" stroke-width="1.6"/>
    </g>
    <!-- name label -->
    <rect x="1333" y="153.8" width="110" height="26" fill="#5a5a5a" opacity="0.78"/>
    <text x="1337.2" y="170" font-size="13.5" font-weight="bold" fill="#fff" textLength="99.8" lengthAdjust="spacingAndGlyphs">Sugeng Prakoso</text>
  </g>
</svg>


<svg id="status" width="1600" height="900" viewBox="0 0 1600 900">
  <!-- status bar (under overlay) -->
  <rect x="0" y="838" width="1600" height="32" fill="#efefef"/>
  <g font-size="15" fill="#5a5a5a">
    <text x="15" y="861" textLength="71" lengthAdjust="spacingAndGlyphs">Slide 1 of 19</text>
    <text x="126" y="861" textLength="108" lengthAdjust="spacingAndGlyphs">English (Indonesia)</text>
    <text x="277.5" y="861" textLength="140.5" lengthAdjust="spacingAndGlyphs">Accessibility: Good to go</text>
    <text x="1098.7" y="861.7" textLength="33.3" lengthAdjust="spacingAndGlyphs">Notes</text>
    <text x="1533" y="862" textLength="26" lengthAdjust="spacingAndGlyphs">56%</text>
  </g>
  <g fill="none" stroke="#5a5a5a" stroke-width="1.3">
    <path d="M258 852 C262 848 268 848 270 853 L266 868 M262 858 L272 857 M259 866 L262 870 L270 864"/>
    <path d="M1076.2 855.8 H1095.7 M1076.2 860.8 H1095.7 M1076.2 866 H1095.7 M1083 851 L1086 848 L1089 851"/>
    <rect x="1172.5" y="849.5" width="17" height="14"/><path d="M1176 849.5 V863.5 M1178.5 852.5 H1186.5 V858 H1178.5Z M1176 860.5 H1189.5"/>
    <rect x="1222" y="849.5" width="7" height="5.5"/><rect x="1232" y="849.5" width="7" height="5.5"/><rect x="1222" y="858" width="7" height="5.5"/><rect x="1232" y="858" width="7" height="5.5"/>
    <path d="M1272.5 850 H1280 V864 H1272.5Z M1280 850 H1288 V864 H1280 M1274.5 853 H1278 M1274.5 856 H1278 M1274.5 859 H1278 M1282 853 H1286 M1282 856 H1286 M1282 859 H1286"/>
    <path d="M1323 849.5 H1337 M1324 849.5 V858 H1336 V849.5 M1330 858 V864 M1326 864 H1334"/>
    <path d="M1363 856.5 H1372 M1379.5 856.5 H1501.7 M1441 852 V861 M1513.7 852 V861 M1509 856.5 H1518"/>
    <path d="M1579 851 L1576.5 857 L1579 863 M1592 851 L1594.5 857 L1592 863"/>
    <rect x="1581" y="852" width="9" height="10"/>
  </g>
  <rect x="1409.5" y="849" width="6.3" height="13.5" fill="#5a5a5a"/>
</svg>
<div class="a" style="left:0;top:870px;width:1600px;height:30px;background:#000"></div>
<svg id="overlay" width="1600" height="900" viewBox="0 0 1600 900">
  <rect x="12.5" y="832.3" width="1574.7" height="54.3" rx="9" fill="#1f2025" fill-opacity="0.86"/>
  <rect x="29.3" y="844.4" width="1541.5" height="2.8" rx="1.4" fill="#6a6b70"/>
  <rect x="29.3" y="844.4" width="718" height="2.8" rx="1.4" fill="#2f67c6"/>
  <rect x="747" y="844.4" width="66" height="2.8" fill="#a9aaae"/>
  <rect x="29.3" y="859.2" width="4.1" height="15.3" rx="2" fill="#fff"/>
  <rect x="37.5" y="859.2" width="4.1" height="15.3" rx="2" fill="#fff"/>
  <text x="62.7" y="871.5" font-size="12.8" font-weight="bold" fill="#f2f2f2" textLength="49" lengthAdjust="spacingAndGlyphs">00:37:08</text>
  <text x="116.5" y="871.5" font-size="12.8" fill="#c9c9c9">/</text>
  <text x="126" y="871.5" font-size="12.8" fill="#c9c9c9" textLength="49.2" lengthAdjust="spacingAndGlyphs">01:19:51</text>
  <path d="M196 863.5 H200 L205 859.8 V873.8 L200 870 H196Z" fill="none" stroke="#fff" stroke-width="1.8" stroke-linejoin="round"/>
  <path d="M208 863.5 C209.5 865.5 209.5 868 208 870 M211 861 C214 864.5 214 869 211 872.5" fill="none" stroke="#fff" stroke-width="1.6" stroke-linecap="round"/>
  <text x="1436.5" y="870.8" font-size="12.8" font-weight="bold" fill="#f0f0f0" textLength="56.7" lengthAdjust="spacingAndGlyphs">Kecepatan</text>
  <g fill="none" stroke="#fff" stroke-width="2.2">
    <circle cx="1511.3" cy="871" r="2.8"/><circle cx="1522.2" cy="871" r="2.8"/>
    <path d="M1512.5 868.5 L1523 858 M1521 868.5 L1510.5 858"/>
    <path d="M1547 864 H1552 V859 M1561.7 864 H1556.7 V859 M1547 868.5 H1552 V873.5 M1561.7 868.5 H1556.7 V873.5"/>
  </g>
</svg>

</body></html>
